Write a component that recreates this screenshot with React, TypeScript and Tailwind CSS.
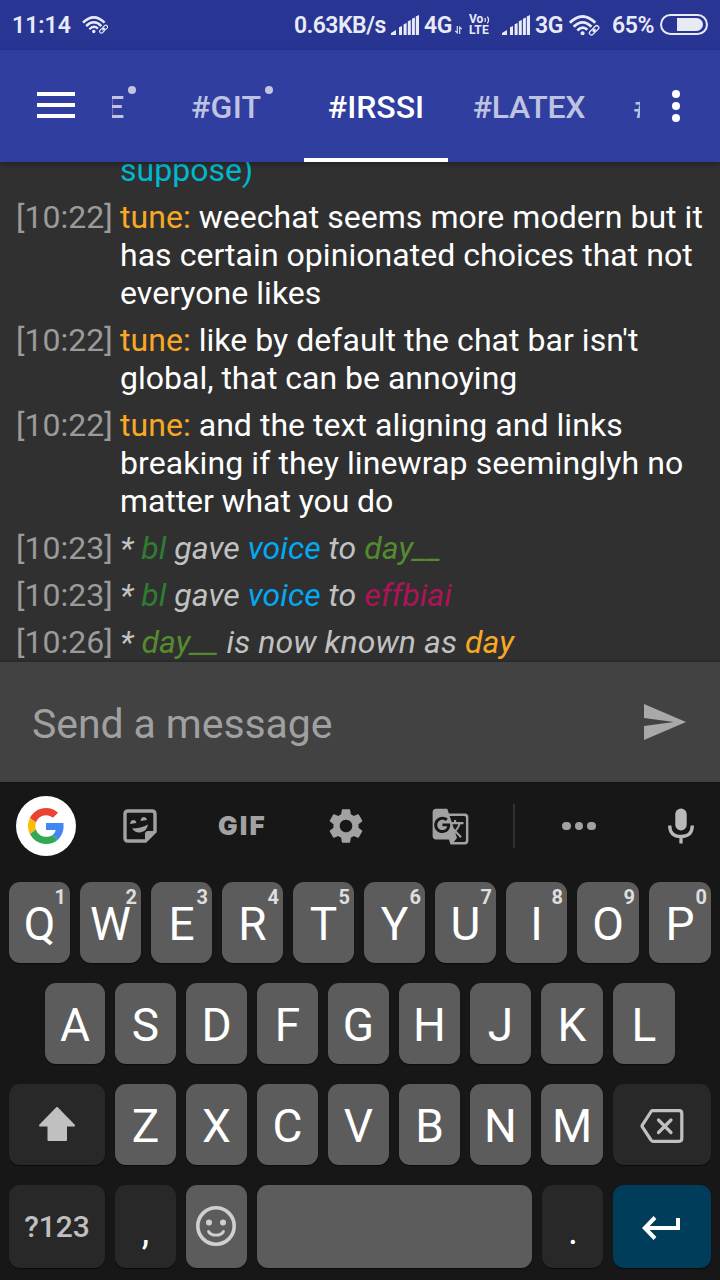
import type { ReactNode } from "react";
import { MdGTranslate, MdSend, MdSettings } from "react-icons/md";

function WifiIcon({ className }: { className: string }) {
  return (
    <svg className={className} viewBox="0 0 32 22" fill="none" stroke="currentColor">
      <path d="M1.2 8.2Q14.5-5 27.8 8.2" strokeWidth="3" />
      <path d="M5.2 12.4Q14.5 3 23.8 12.4" strokeWidth="3" />
      <path d="M9 16.2Q14.5 10.6 19.6 15.4" strokeWidth="2.8" />
      <circle cx="14.5" cy="19" r="2.1" fill="currentColor" stroke="none" />
      <g strokeWidth="1.4" transform="rotate(-45 26.5 16)">
        <rect x="20.5" y="14" width="6.5" height="4.2" rx="2.1" />
        <rect x="26" y="14" width="6.5" height="4.2" rx="2.1" />
        <path d="M24.5 16.1h4" />
      </g>
    </svg>
  );
}

function SignalIcon() {
  return (
    <svg className="h-5 w-7 shrink-0" viewBox="0 0 28 20" fill="currentColor">
      <path d="M0 20v-2l5-3v5zM8 12.3l3-1.3v9H8zM12.6 9.3l3-1.3v12h-3zM16.800 6.3l3-1.4V20h-3zM20.900 3.800l3-1.400V20h-3zM24.800 1.400L28 0v20h-3.200z" />
    </svg>
  );
}

function StatusBar() {
  return (
    <div className="flex h-[50px] items-center bg-[#283593] pr-[12px] pl-[12px] text-[24px] font-medium text-[#e8eaf6]">
      <span className="mt-[3px] w-[70px] text-[23px] font-semibold">11:14</span>
      <WifiIcon className="h-[18px] w-[26px]" />
      <span className="mt-[3px] ml-[186px] w-[97px] text-[23px] font-semibold tracking-[-0.5px]">0.63KB/s</span>
      <SignalIcon />
      <span className="mt-[3px] ml-[5px] w-[30px] text-[23px] font-semibold tracking-[-0.5px]">4G</span>
      <svg className="mt-[10px] h-[8px] w-[9px]" viewBox="0 0 9 10" fill="none" stroke="currentColor" strokeWidth="1.4">
        <path d="M3 0v8.5L.5 6M6 10V1.5L8.5 4" />
      </svg>
      <div className="ml-[6px] flex w-[24px] flex-col text-[12px] leading-[11px] font-bold">
        <div className="flex items-center whitespace-nowrap">
          Vo
          <svg className="ml-px h-[8px] w-[6px] shrink-0" viewBox="0 0 6 8" fill="none" stroke="currentColor" strokeWidth="1.2">
            <path d="M.8 2.2q1.2 1.8 0 3.6M3.3.7q2.5 3.3 0 6.6" />
          </svg>
        </div>
        <span className="tracking-[0.2px]">LTE</span>
      </div>
      <div className="ml-[9px] flex items-center">
        <SignalIcon />
        <span className="mt-[3px] ml-[5px] w-[33px] text-[23px] font-semibold tracking-[-0.5px]">3G</span>
        <WifiIcon className="h-[21px] w-[32px]" />
        <span className="mt-[3px] ml-[12px] w-[48px] text-[23px] font-semibold tracking-[-0.4px]">65%</span>
        <div className="-mt-[1px] flex h-[21px] w-[48px] items-center justify-end rounded-full border-2 border-current pr-[3px]">
          <div className="h-[13px] w-[26px] rounded-l-[1px] rounded-r-full bg-current" />
        </div>
      </div>
    </div>
  );
}

function AppBar() {
  return (
    <header className="relative z-10 flex h-[112px] bg-[#303f9f] text-[32px] leading-[38px] font-medium text-white/70 shadow-[0_2px_5px_rgba(0,0,0,0.3)]">
      <div className="flex w-[112px] flex-col justify-center gap-[7px] pb-[2px] pl-[37px]">
        <div className="h-[4px] w-[38px] bg-white" />
        <div className="h-[4px] w-[38px] bg-white" />
        <div className="h-[4px] w-[38px] bg-white" />
      </div>
      <nav className="flex w-[528px] overflow-hidden whitespace-nowrap">
        <div className="flex w-[56px] shrink-0 pt-[38px]">
          <span className="-ml-[6px] w-[22px]">E</span>
          <i className="-mt-[2px] size-[8px] rounded-full bg-[#c1c5e2]" />
        </div>
        <div className="flex w-[136px] shrink-0 pt-[38px] pl-[23px]">
          <span className="w-[74px] tracking-[0.3px]">#GIT</span>
          <i className="-mt-[2px] size-[8px] rounded-full bg-[#c1c5e2]" />
        </div>
        <div className="w-[144px] shrink-0 border-b-4 border-white pt-[38px] text-center text-white">#IRSSI</div>
        <div className="w-[162px] shrink-0 pt-[38px] text-center tracking-[-0.2px]">#LATEX</div>
        <div className="w-[60px] shrink-0 pt-[38px] pl-[23px]">#</div>
      </nav>
      <div className="flex flex-1 flex-col items-center justify-center gap-[4px] pr-[8px]">
        <i className="size-[8px] rounded-full bg-white" />
        <i className="size-[8px] rounded-full bg-white" />
        <i className="size-[8px] rounded-full bg-white" />
      </div>
    </header>
  );
}

function Message({ time, children }: { time: string; children: ReactNode }) {
  return (
    <div className="flex shrink-0 whitespace-nowrap">
      <span className="w-[104px] shrink-0 text-[#9b9b9b]">{time}</span>
      <p className="tracking-[0.04px]">{children}</p>
    </div>
  );
}

function Tune() {
  return <span className="text-[#f9a825]">tune:</span>;
}

function Chat() {
  return (
    <main className="flex h-[500px] flex-col justify-end gap-[9px] overflow-hidden bg-[#303030] px-4 pb-px text-[32px] leading-[38px] text-white">
      <Message time=""><span className="text-[#00b8cf]">suppose)</span></Message>
      <Message time="[10:22]">
        <Tune /> weechat seems more modern but it<br />has certain opinionated choices that not<br />everyone likes
      </Message>
      <Message time="[10:22]">
        <Tune /> like by default the chat bar isn't<br /><span className="tracking-normal">global, that can be annoying</span>
      </Message>
      <Message time="[10:22]">
        <Tune /> and the text aligning and links<br /><span className="tracking-[0.1px]">breaking if they linewrap seeminglyh no</span><br /><span className="tracking-[-0.08px]">matter what you do</span>
      </Message>
      <Message time="[10:23]">
        <i className="text-[#c1c1c1]">* <b className="font-normal text-[#2e7d32]">bl</b> gave <b className="font-normal text-[#03a9f4]">voice</b> to <b className="font-normal text-[#558b2f]">day__</b></i>
      </Message>
      <Message time="[10:23]">
        <i className="text-[#c1c1c1]">* <b className="font-normal text-[#2e7d32]">bl</b> gave <b className="font-normal text-[#03a9f4]">voice</b> to <b className="font-normal text-[#ad1457]">effbiai</b></i>
      </Message>
      <Message time="[10:26]">
        <i className="tracking-[0.08px] text-[#c1c1c1]">* <b className="font-normal text-[#558b2f]">day__</b> is now known as <b className="font-normal text-[#f9a825]">day</b></i>
      </Message>
    </main>
  );
}

function Toolbar() {
  return (
    <div className="flex h-[100px] items-center pb-[12px] pl-[16px] text-[#a2a2a2]">
      <div className="flex size-[60px] items-center justify-center rounded-full bg-white">
        <svg className="size-[36px]" viewBox="0 0 48 48">
          <path fill="#ea4335" d="M24 9.5c3.54 0 6.71 1.22 9.21 3.6l6.85-6.85C35.9 2.38 30.47 0 24 0 14.62 0 6.51 5.38 2.56 13.22l7.98 6.19C12.43 13.72 17.74 9.5 24 9.5z" />
          <path fill="#4285f4" d="M47.300 20H24v9.300h12.940c-.58 2.960-2.260 5.200-4.780 6.900l7.730 6c4.510-4.180 7.500-10.360 7.500-17.650z" />
          <path fill="#fbbc05" d="M10.53 28.59c-.48-1.45-.76-2.99-.76-4.59s.27-3.14.76-4.59l-7.98-6.19C.92 16.46 0 20.12 0 24s.92 7.54 2.56 10.78l7.97-6.19z" />
          <path fill="#34a853" d="M24 48c6.48 0 11.93-2.13 15.89-5.81l-7.73-6c-2.15 1.45-4.92 2.3-8.16 2.3-6.26 0-11.57-4.22-13.47-9.91l-7.98 6.19C6.51 42.62 14.62 48 24 48z" />
        </svg>
      </div>
      <svg className="ml-[47px] h-[34px] w-[34px]" viewBox="0 0 34 34" fill="none" stroke="currentColor">
        <path d="M5 2H29Q32 2 32 5V22.5L22.5 32H5Q2 32 2 29V5Q2 2 5 2z" strokeWidth="3.4" />
        <path d="M22 32v-7q0-3 3-3h7z" fill="currentColor" stroke="none" />
        <path d="M9 19.5q9 0 16-4-1 6.5-7 7.800Q12.500 24.500 9 19.500zM7 15q.5-4 3.500-4 2.500.2 3 3zM17.500 12q.5-4 3.500-4 2.500.2 3 3z" fill="currentColor" stroke="none" />
      </svg>
      <span className="ml-[61px] w-[50px] font-['Inter'] text-[26px] leading-none font-black tracking-[2.2px]">GIF</span>
      <MdSettings className="ml-[57px] size-[42px]" />
      <MdGTranslate className="mt-[1px] ml-[64px] size-[39px]" />
      <div className="ml-[43px] h-[44px] w-[2px] bg-[#303132]" />
      <div className="ml-[47px] flex gap-[4px]">
        <i className="size-[8.5px] rounded-full bg-current" />
        <i className="size-[8.5px] rounded-full bg-current" />
        <i className="size-[8.5px] rounded-full bg-current" />
      </div>
      <svg className="ml-[72px] h-[36px] w-[26px] text-[#b9b9b9]" viewBox="0 0 26 36" fill="none" stroke="currentColor">
        <rect x="7.3" y="0.5" width="11.4" height="22" rx="5.7" fill="currentColor" stroke="none" />
        <path d="M1.7 17.500q0 11 11.300 11t11.300-11M13 28v7.500" strokeWidth="3.3" />
      </svg>
    </div>
  );
}

function Key({ label, hint, width = "w-[61px]" }: { label: string; hint?: string; width?: string }) {
  return (
    <div className={`relative flex h-[81px] shrink-0 items-center justify-center rounded-[11px] bg-[#5c5c5c] pt-[4px] text-[46px] leading-[53px] text-white shadow-[0_1px_1px_#0c0c0c] ${width}`}>
      <span className="-mt-px">{label}</span>
      {hint && <span className="absolute top-[3px] right-[4px] text-[20px] leading-[24px] font-bold text-[#dedede]">{hint}</span>}
    </div>
  );
}

function Keyboard() {
  return (
    <section className="h-[498px] bg-[#171717]">
      <Toolbar />
      <div className="flex flex-col gap-[20px] px-[9px]">
        <div className="flex gap-[10px]">
          {[..."QWERTYUIO"].map((c, i) => <Key key={c} label={c} hint={String(i + 1)} width={c === "O" ? "w-[62px]" : "w-[61px]"} />)}
          <Key label="P" hint="0" width="w-[62px]" />
        </div>
        <div className="flex gap-[10px] pl-[36px]">
          {[..."ASDFGHJKL"].map((c) => <Key key={c} label={c} width={c === "A" ? "w-[60px]" : c === "K" || c === "L" ? "w-[62px]" : "w-[61px]"} />)}
        </div>
        <div className="flex gap-[10px]">
          <div className="flex h-[81px] w-[96px] shrink-0 items-center justify-center rounded-[11px] bg-[#282828] pb-[2px] text-[#c0c0c0] shadow-[0_1px_1px_#0c0c0c]">
            <svg className="h-[34px] w-[36px]" viewBox="0 0 36 34" fill="currentColor" stroke="currentColor" strokeWidth="2" strokeLinejoin="round">
              <path d="M18 1L35 18.5H27V33H9.5V18.5H1z" />
            </svg>
          </div>
          {[..."ZXCVBNM"].map((c) => <Key key={c} label={c} width={c === "M" ? "w-[62px]" : "w-[61px]"} />)}
          <div className="flex h-[81px] w-[98px] shrink-0 items-center justify-center rounded-[11px] bg-[#282828] text-[#c0c0c0] shadow-[0_1px_1px_#0c0c0c]">
            <svg className="mt-[2px] h-[34px] w-[44px]" viewBox="0 0 44 34" fill="none" stroke="currentColor" strokeWidth="3.2" strokeLinejoin="round">
              <path d="M12.5 1.7H39Q41.8 1.7 41.8 4.5V29.5Q41.8 32.3 39 32.3H13Q11.8 32.3 11 31L2.5 18.2Q1.6 17 2.5 15.8L10.8 3Q11.5 1.7 12.5 1.7z" />
              <path d="M18.5 11L31 23.5M31 11L18.5 23.5" strokeLinecap="round" />
            </svg>
          </div>
        </div>
        <div className="flex gap-[10px]">
          <div className="flex h-[83px] w-[96px] shrink-0 items-center justify-center rounded-[11px] bg-[#282828] text-[30px] font-medium text-[#c0c0c0] shadow-[0_1px_1px_#0c0c0c]">?123</div>
          <div className="flex h-[83px] w-[61px] shrink-0 items-end justify-center rounded-[11px] bg-[#282828] pb-[14px] text-[38px] leading-[46px] text-white shadow-[0_1px_1px_#0c0c0c]">,</div>
          <div className="flex h-[83px] w-[61px] shrink-0 items-center justify-center rounded-[11px] bg-[#5c5c5c] pr-[1px] pb-[2px] text-[#d0d0d0] shadow-[0_1px_1px_#0c0c0c]">
            <svg className="size-[40px]" viewBox="0 0 40 40" fill="none" stroke="currentColor">
              <circle cx="20" cy="20" r="18.2" strokeWidth="3.6" />
              <circle cx="13" cy="16.5" r="3" fill="currentColor" stroke="none" />
              <circle cx="27" cy="16.5" r="3" fill="currentColor" stroke="none" />
              <path d="M12.5 25.5Q14.5 29.2 20 29.2T27.5 25.5" strokeWidth="2.8" strokeLinecap="round" />
            </svg>
          </div>
          <div className="h-[83px] w-[275px] shrink-0 rounded-[11px] bg-[#5c5c5c] shadow-[0_1px_1px_#0c0c0c]" />
          <div className="flex h-[83px] w-[61px] shrink-0 items-end justify-center rounded-[11px] bg-[#282828] pb-[14px] pl-[1px] text-[38px] leading-[46px] text-white shadow-[0_1px_1px_#0c0c0c]">.</div>
          <div className="flex h-[83px] w-[98px] shrink-0 items-center justify-center rounded-[11px] bg-[#003d5b] pr-[2px] text-white shadow-[0_1px_1px_#0c0c0c]">
            <svg className="mt-[2px] mr-[1px] h-[24px] w-[38px]" viewBox="0 0 38 24" fill="none" stroke="currentColor" strokeWidth="4">
              <path d="M13 1.5L2.8 12 13 22.5M3 12H36V2" />
            </svg>
          </div>
        </div>
      </div>
    </section>
  );
}

export default function App() {
  return (
    <div className="h-[1280px] w-[720px] overflow-hidden bg-[#171717] font-['Roboto',sans-serif]">
      <StatusBar />
      <AppBar />
      <Chat />
      <div className="relative z-10 flex h-[120px] items-center justify-between bg-[#424242] pr-[32px] pl-[32px] text-[41px] text-[#a0a0a0] shadow-[0_0_4px_rgba(0,0,0,0.35)]">
        <span className="mt-[5px] tracking-[-0.09px]">Send a message</span>
        <MdSend className="size-[48px] text-[#a9a9a9]" />
      </div>
      <Keyboard />
    </div>
  );
}
